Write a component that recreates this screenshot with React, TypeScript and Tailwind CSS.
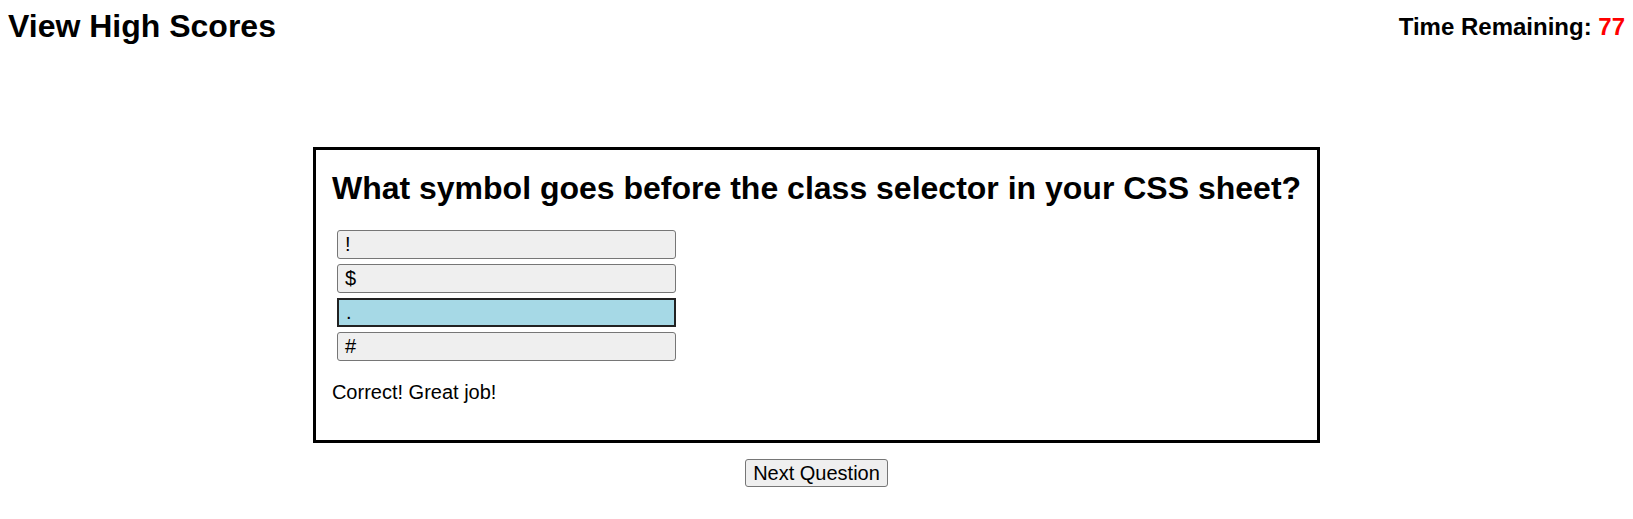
import { useState } from "react";

const choices = ["!", "$", ".", "#"];

export default function App() {
  const [picked, setPicked] = useState(2);

  return (
    <div className="min-h-screen bg-white text-black font-['Liberation_Sans',Arial,sans-serif]">
      <header className="flex justify-between items-center px-2 pt-2">
        <h1 className="text-[32px] leading-[37px] font-bold">View High Scores</h1>
        <div className="text-[24px] leading-[28px] font-bold">
          Time Remaining: <span className="text-[#ff0000]">77</span>
        </div>
      </header>

      <div className="flex flex-col items-center mt-[102px]">
        <div className="border-[3px] border-black px-4 pt-5 pb-4">
          <h2 className="text-[32px] leading-[37px] font-bold mb-[23px]">
            What symbol goes before the class selector in your CSS sheet?
          </h2>
          <div className="flex flex-col gap-[5px] ml-[5px]">
            {choices.map((c, idx) => (
              <button
                key={idx}
                onClick={() => setPicked(idx)}
                className={`w-[339px] h-[29px] text-left pl-[7px] text-[20px] leading-[23px] ${
                  picked === idx
                    ? "bg-[#a6d9e6] border-2 border-[#222222]"
                    : "bg-[#efefef] border border-[#767676] rounded-[3px]"
                }`}
              >
                {c}
              </button>
            ))}
          </div>
          <p className="text-[20px] leading-[23px] my-5">Correct! Great job!</p>
        </div>

        <button className="mt-4 h-[28px] px-[7px] text-[20px] leading-[23px] bg-[#efefef] border border-[#767676] rounded-[3px]">
          Next Question
        </button>
      </div>
    </div>
  );
}
